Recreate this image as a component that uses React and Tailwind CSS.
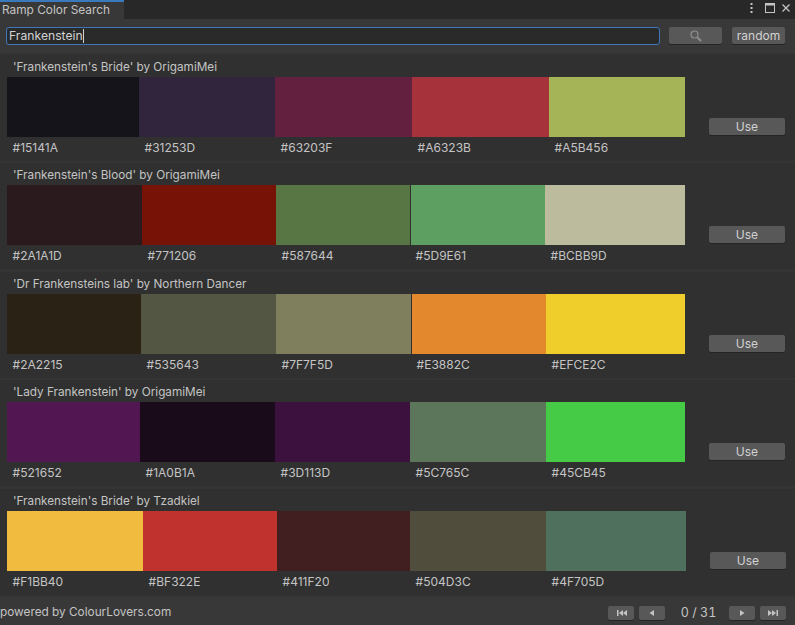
const palettes = [
  {
    title: "'Frankenstein's Bride' by OrigamiMei",
    top: 'mt-[2px]',
    btn: 'ml-[23px]',
    swatches: [
      ['#15141A', 'w-[132px]'],
      ['#31253D', 'w-[136px]'],
      ['#63203F', 'w-[137px]'],
      ['#A6323B', 'w-[137px]'],
      ['#A5B456', 'w-[136px]'],
    ],
  },
  {
    title: "'Frankenstein's Blood' by OrigamiMei",
    top: 'mt-[2px]',
    btn: 'ml-[23px]',
    swatches: [
      ['#2A1A1D', 'w-[135px]'],
      ['#771206', 'w-[134px]'],
      ['#587644', 'w-[134px]'],
      ['#5D9E61', 'w-[135px] border-l border-[#2f2f2f]'],
      ['#BCBB9D', 'w-[140px]'],
    ],
  },
  {
    title: "'Dr Frankensteins lab' by Northern Dancer",
    top: 'mt-[3px]',
    btn: 'ml-[23px]',
    swatches: [
      ['#2A2215', 'w-[134px]'],
      ['#535643', 'w-[135px]'],
      ['#7F7F5D', 'w-[135px]'],
      ['#E3882C', 'w-[135px] border-l border-[#2f2f2f]'],
      ['#EFCE2C', 'w-[139px]'],
    ],
  },
  {
    title: "'Lady Frankenstein' by OrigamiMei",
    top: 'mt-[2px]',
    btn: 'ml-[23px]',
    swatches: [
      ['#521652', 'w-[133px]'],
      ['#1A0B1A', 'w-[135px]'],
      ['#3D113D', 'w-[135px]'],
      ['#5C765C', 'w-[136px]'],
      ['#45CB45', 'w-[139px]'],
    ],
  },
  {
    title: "'Frankenstein's Bride' by Tzadkiel",
    top: 'mt-[3px]',
    btn: 'ml-[24px]',
    swatches: [
      ['#F1BB40', 'w-[136px]'],
      ['#BF322E', 'w-[134px]'],
      ['#411F20', 'w-[133px]'],
      ['#504D3C', 'w-[136px]'],
      ['#4F705D', 'w-[140px]'],
    ],
  },
]

function PagerIcon({ type }) {
  const paths = {
    first: 'M1 1h1.5v6H1zM7 1v6L3 4zM11 1v6L7 4z',
    prev: 'M7 1v6L2.5 4z',
    next: 'M3 1v6l4.5-3z',
    last: 'M0 1v6l4-3zM4 1v6l4-3zM8.5 1H10v6H8.5z',
  }
  return (
    <svg width="11" height="8" viewBox="0 0 11 8" fill="#c4c4c4">
      <path d={paths[type]} />
    </svg>
  )
}

function PagerButton({ type, className }) {
  return (
    <button className={`h-[14px] bg-[#585858] rounded-[2px] flex items-center justify-center shadow-[0_1px_0_#242424] ${className}`}>
      <PagerIcon type={type} />
    </button>
  )
}

function PaletteRow({ palette }) {
  return (
    <div className={`${palette.top} h-[106px] bg-[#303030] flex flex-col`}>
      <div className="h-[22px] pl-[13px] pb-px flex items-end text-[11.75px] leading-[18px] text-[#c4c4c4]">{palette.title}</div>
      <div className="flex items-end">
        <div className="ml-[7px] w-[679px]">
          <div className="flex h-[60px]">
            {palette.swatches.map(([hex, width]) => (
              <div key={hex} className={`${width} h-full`} style={{ backgroundColor: hex }} />
            ))}
          </div>
          <div className="flex h-[22px] items-center">
            {palette.swatches.map(([hex, width]) => (
              <div key={hex} className={`${width.split(' ')[0]} pl-[5.6px] text-[12px] text-[#c4c4c4]`}>{hex}</div>
            ))}
          </div>
        </div>
        <button className={`${palette.btn} mb-[24px] w-[76px] h-[17px] bg-[#585858] rounded-[2px] text-[12px] leading-[16px] text-[#d2d2d2] shadow-[0_1px_0_#242424]`}>
          Use
        </button>
      </div>
    </div>
  )
}

export default function App() {
  return (
    <div className="w-[795px] h-[625px] overflow-hidden flex flex-col bg-[#343434] font-['Inter','Noto_Sans',sans-serif]">
      <div className="h-[19px] bg-[#282828] flex items-start">
        <div className="w-[124px] h-[19px] bg-[#383838] border-t-2 border-[#3a79bb] pl-[2px] text-[11.85px] leading-[16px] text-[#c4c4c4]">
          Ramp Color Search
        </div>
        <div className="ml-auto mr-[5px] mt-[3px] flex items-center h-[10px]">
          <svg width="3" height="10" viewBox="0 0 3 10" fill="#c4c4c4">
            <rect x="0.5" y="0" width="2" height="2" />
            <rect x="0.5" y="4" width="2" height="2" />
            <rect x="0.5" y="8" width="2" height="2" />
          </svg>
          <svg className="ml-[12px]" width="10" height="10" viewBox="0 0 10 10" fill="none" stroke="#c4c4c4">
            <rect x="0.5" y="0.5" width="9" height="9" />
            <path d="M0.5 1.5h9" strokeWidth="2" />
          </svg>
          <svg className="ml-[7px]" width="8" height="8" viewBox="0 0 8 8" fill="none" stroke="#c4c4c4" strokeWidth="1.3">
            <path d="M0.5 0.5l7 7M7.5 0.5l-7 7" />
          </svg>
        </div>
      </div>

      <div className="h-[34px] flex items-start pt-[8px] bg-[#383838]">
        <div className="ml-[6px] w-[654px] h-[18px] bg-[#2a2a2a] border border-[#3a79bb] rounded-[3px] pl-[2px] flex items-center text-[12.2px] text-[#d2d2d2]">
          Frankenstein
          <span className="w-px h-[14px] bg-[#d2d2d2]" />
        </div>
        <button className="ml-[9px] w-[53px] h-[17px] bg-[#585858] rounded-[2px] flex items-center justify-center shadow-[0_1px_0_#242424]">
          <svg width="12" height="12" viewBox="0 0 12 12" fill="none" stroke="#8f8f8f">
            <circle cx="4.5" cy="4.5" r="3.5" strokeWidth="1.2" />
            <path d="M7.5 7.5l3.5 3.5" strokeWidth="2" />
          </svg>
        </button>
        <button className="ml-[10px] w-[53px] h-[17px] bg-[#585858] rounded-[2px] text-[12px] leading-[16px] text-[#d2d2d2] shadow-[0_1px_0_#242424]">
          random
        </button>
      </div>

      {palettes.map((palette) => (
        <PaletteRow key={palette.title} palette={palette} />
      ))}

      <div className="flex-1 mt-[2px] bg-[#383838] flex items-start text-[11.8px] text-[#c4c4c4]">
        <span className="mt-[6px] leading-[18px]">powered by ColourLovers.com</span>
        <div className="ml-auto mt-[7px] flex items-center">
          <PagerButton type="first" className="w-[26px]" />
          <PagerButton type="prev" className="w-[26px] ml-[5px]" />
          <span className="w-[64px] pl-[3px] text-center text-[12.5px] tabular-nums">0 / 31</span>
          <PagerButton type="next" className="w-[26px]" />
          <PagerButton type="last" className="w-[26px] ml-[5px] mr-[9px]" />
        </div>
      </div>
    </div>
  )
}
